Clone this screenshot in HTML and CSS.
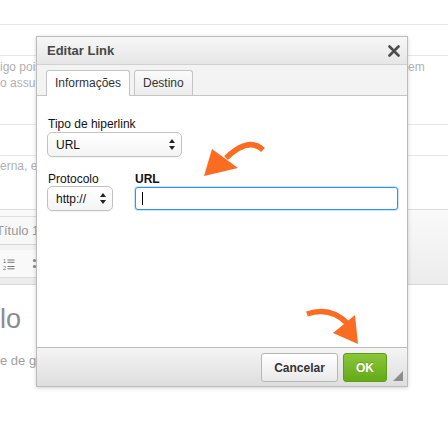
FILE: index.html
```html
<!DOCTYPE html>
<html lang="pt">
<head>
<meta charset="utf-8">
<title>Editar Link</title>
<link rel="stylesheet" href="styles.css">
</head>
<body>
<div class="page">
  <div class="strip s1"></div>
  <div class="strip s2"></div>
  <div class="strip s3">
    <div class="txtrow"><span>igo pois</span><span class="right-txt">em</span></div>
    <div class="txtrow"><span>o assu</span></div>
  </div>
  <div class="strip s4"></div>
  <div class="strip s5">
    <div class="txtrow"><span>erna, es</span></div>
  </div>
  <div class="toolbar">
    <div class="tb-left">
      <div class="combo">Título 1</div>
      <div class="tb-icons">
        <svg class="ico-num" width="12" height="12" viewBox="0 0 12 12">
          <text x="0" y="5" font-size="5.5" font-family="Liberation Sans, sans-serif" fill="#666">1</text>
          <text x="0" y="11.5" font-size="5.5" font-family="Liberation Sans, sans-serif" fill="#666">2</text>
          <rect x="4.5" y="1.5" width="7" height="1" fill="#777"/>
          <rect x="4.5" y="3.8" width="7" height="1" fill="#777"/>
          <rect x="4.5" y="8" width="7" height="1" fill="#777"/>
          <rect x="4.5" y="10.3" width="7" height="1" fill="#777"/>
        </svg>
        <svg class="ico-bul" width="6" height="12" viewBox="0 0 6 12">
          <circle cx="2.5" cy="2.5" r="1.6" fill="#888"/>
          <circle cx="2.5" cy="8.5" r="1.6" fill="#888"/>
        </svg>
      </div>
    </div>
  </div>
  <div class="heading">lo</div>
  <div class="para">e de ge</div>
</div>

<div class="dialog">
  <div class="dlg-head">
    <span class="dlg-title">Editar Link</span>
    <svg class="dlg-close" width="12" height="12" viewBox="0 0 12 12">
      <path d="M1.5 1.5 L10.5 10.5 M10.5 1.5 L1.5 10.5" stroke="#4d4d4d" stroke-width="2.6" stroke-linecap="round"/>
    </svg>
  </div>
  <div class="dlg-tabs">
    <div class="tab tab-active">Informações</div>
    <div class="tab">Destino</div>
  </div>
  <div class="dlg-body">
    <div class="lbl">Tipo de hiperlink</div>
    <div class="select sel-type">
      <span>URL</span>
      <svg class="updown" width="6" height="11" viewBox="0 0 6 11"><path d="M3 0 L6 4 L0 4 Z M0 7 L6 7 L3 11 Z" fill="#222"/></svg>
    </div>
    <div class="row">
      <div class="col col-proto">
        <div class="lbl">Protocolo</div>
        <div class="select sel-proto">
          <span>http://</span>
          <svg class="updown" width="6" height="11" viewBox="0 0 6 11"><path d="M3 0 L6 4 L0 4 Z M0 7 L6 7 L3 11 Z" fill="#222"/></svg>
        </div>
      </div>
      <div class="col col-url">
        <div class="lbl lbl-bold">URL</div>
        <div class="url-input"><span class="caret"></span></div>
      </div>
    </div>
  </div>
  <div class="dlg-foot">
    <button class="btn btn-cancel">Cancelar</button>
    <button class="btn btn-ok">OK</button>
    <span class="resize"></span>
  </div>
</div>

<svg class="arrows" width="448" height="421" viewBox="0 0 448 421">
  <path d="M263 150 Q249 136 226 158" fill="none" stroke="#f96c22" stroke-width="5.5"/>
  <path d="M204 176 L212 149 L238 168 Z" fill="#f96c22"/>
  <path d="M307 314 Q330 306 347 323" fill="none" stroke="#f96c22" stroke-width="5.5"/>
  <path d="M358 344 L333 333 L355 315 Z" fill="#f96c22"/>
</svg>
</body>
</html>
```

FILE: styles.css
```css
* { box-sizing: border-box; }

html, body {
  margin: 0;
  padding: 0;
}

body {
  width: 448px;
  height: 421px;
  overflow: hidden;
  background: #fff;
  font-family: "Liberation Sans", Arial, Helvetica, sans-serif;
  position: relative;
}

/* ---------- background page ---------- */
.page {
  display: flex;
  flex-direction: column;
  color: #b0b0b0;
  font-size: 12px;
}

.strip { border-bottom: 1px solid #e8e8e8; }
.s1 { height: 25px; }
.s2 { height: 31px; }
.s3 { height: 69px; padding-top: 3px; }
.s4 { height: 31px; }
.s5 { height: 53px; padding-top: 2px; border-bottom: 0; }

.txtrow {
  display: flex;
  line-height: 16px;
  white-space: nowrap;
}
.right-txt { margin-left: auto; width: 40px; }

.toolbar {
  height: 76px;
  border-top: 1px solid #dcdcdc;
  border-bottom: 1px solid #d8d8d8;
  background: linear-gradient(#fafafa, #ececec);
}
.tb-left {
  width: 40px;
  display: flex;
  flex-direction: column;
}
.combo {
  margin-top: 6px;
  height: 29px;
  border-top: 1px solid #dedede;
  border-bottom: 1px solid #d6d6d6;
  background: #f8f8f8;
  color: #999;
  font-size: 13px;
  line-height: 27px;
  text-indent: -4px;
  white-space: nowrap;
}
.tb-icons {
  margin-top: 5px;
  height: 28px;
  border-bottom: 1px solid #dcdcdc;
  background: #f9f9f9;
  display: flex;
  align-items: center;
  padding-left: 3px;
  gap: 17px;
}

.heading {
  margin-top: 18px;
  font-size: 27px;
  line-height: 32px;
  color: #8c8c8c;
}
.para {
  margin-top: 18px;
  font-size: 13px;
  line-height: 16px;
  color: #a0a0a0;
}

/* ---------- dialog ---------- */
.dialog {
  position: absolute;
  left: 36px;
  top: 36px;
  width: 372px;
  height: 351px;
  border: 1px solid #bcbcbc;
  background: #fff;
  box-shadow: 0 1px 4px rgba(0, 0, 0, 0.18);
  display: flex;
  flex-direction: column;
}

.dlg-head {
  height: 28px;
  flex: none;
  border-bottom: 1px solid #d0d0d0;
  background: linear-gradient(#f7f7f7, #e6e6e6);
  display: flex;
  align-items: center;
  justify-content: space-between;
  padding: 0 7px 0 10px;
}
.dlg-title {
  font-size: 13px;
  font-weight: bold;
  color: #474747;
}

.dlg-tabs {
  height: 31px;
  flex: none;
  background: #f3f3f3;
  border-bottom: 1px solid #c6c6c6;
  padding: 5px 0 0 9px;
  display: flex;
  gap: 4px;
}
.tab {
  height: 25px;
  padding: 0 8px;
  border: 1px solid #c4c4c4;
  border-bottom: 0;
  border-radius: 3px 3px 0 0;
  background: linear-gradient(#fbfbfb, #ececec);
  font-size: 12px;
  line-height: 24px;
  color: #333;
}
.tab-active {
  background: #fff;
  height: 26px;
}

.dlg-body {
  flex: 1;
  padding: 21px 9px 0 10px;
  display: flex;
  flex-direction: column;
}
.lbl {
  font-size: 12px;
  line-height: 14px;
  color: #111;
  padding-left: 1px;
}
.lbl-bold { font-weight: bold; padding-left: 0; }

.select {
  margin-top: 1px;
  height: 25px;
  border: 1px solid #c2c2c2;
  border-radius: 5px;
  background: linear-gradient(#ffffff, #f4f4f4);
  box-shadow: 0 1px 1px rgba(0, 0, 0, 0.05);
  display: flex;
  align-items: center;
  justify-content: space-between;
  padding: 0 6px 0 8px;
  font-size: 12px;
  color: #111;
}
.sel-type { width: 135px; }
.sel-proto { width: 66px; margin-top: 0; }

.row {
  margin-top: 15px;
  display: flex;
  gap: 22px;
}
.col { display: flex; flex-direction: column; }
.col-url { flex: 1; }

.url-input {
  margin-top: 1px;
  height: 23px;
  border: 1px solid #2f95ec;
  border-radius: 3px;
  background: #fff;
  box-shadow: 0 0 0 1px rgba(47, 149, 236, 0.25);
  display: flex;
  align-items: center;
  padding-left: 6px;
}
.caret {
  width: 1px;
  height: 13px;
  background: #000;
}

.dlg-foot {
  height: 39px;
  flex: none;
  border-top: 1px solid #bcbcbc;
  background: linear-gradient(#f4f4f4, #dedede);
  display: flex;
  justify-content: flex-end;
  align-items: flex-start;
  padding: 5px 4px 0 0;
}
.btn {
  height: 29px;
  margin: 0;
  font-family: inherit;
  font-size: 12px;
  font-weight: bold;
  border-radius: 3px;
  padding: 0;
}
.btn-cancel {
  width: 77px;
  border: 1px solid #b6b6b6;
  background: linear-gradient(#ffffff, #e9e9e9);
  color: #333;
}
.btn-ok {
  width: 44px;
  margin-left: 5px;
  border: 1px solid #58a016;
  background: linear-gradient(#8bc53a, #65aa18);
  color: #fff;
  text-shadow: 0 -1px 0 rgba(0, 0, 0, 0.2);
}
.resize {
  align-self: flex-end;
  margin: 0 0 5px 6px;
  width: 0;
  height: 0;
  border-left: 10px solid transparent;
  border-bottom: 10px solid #8d8d8d;
}

/* ---------- overlay arrows ---------- */
.arrows {
  position: absolute;
  left: 0;
  top: 0;
  pointer-events: none;
}
```
